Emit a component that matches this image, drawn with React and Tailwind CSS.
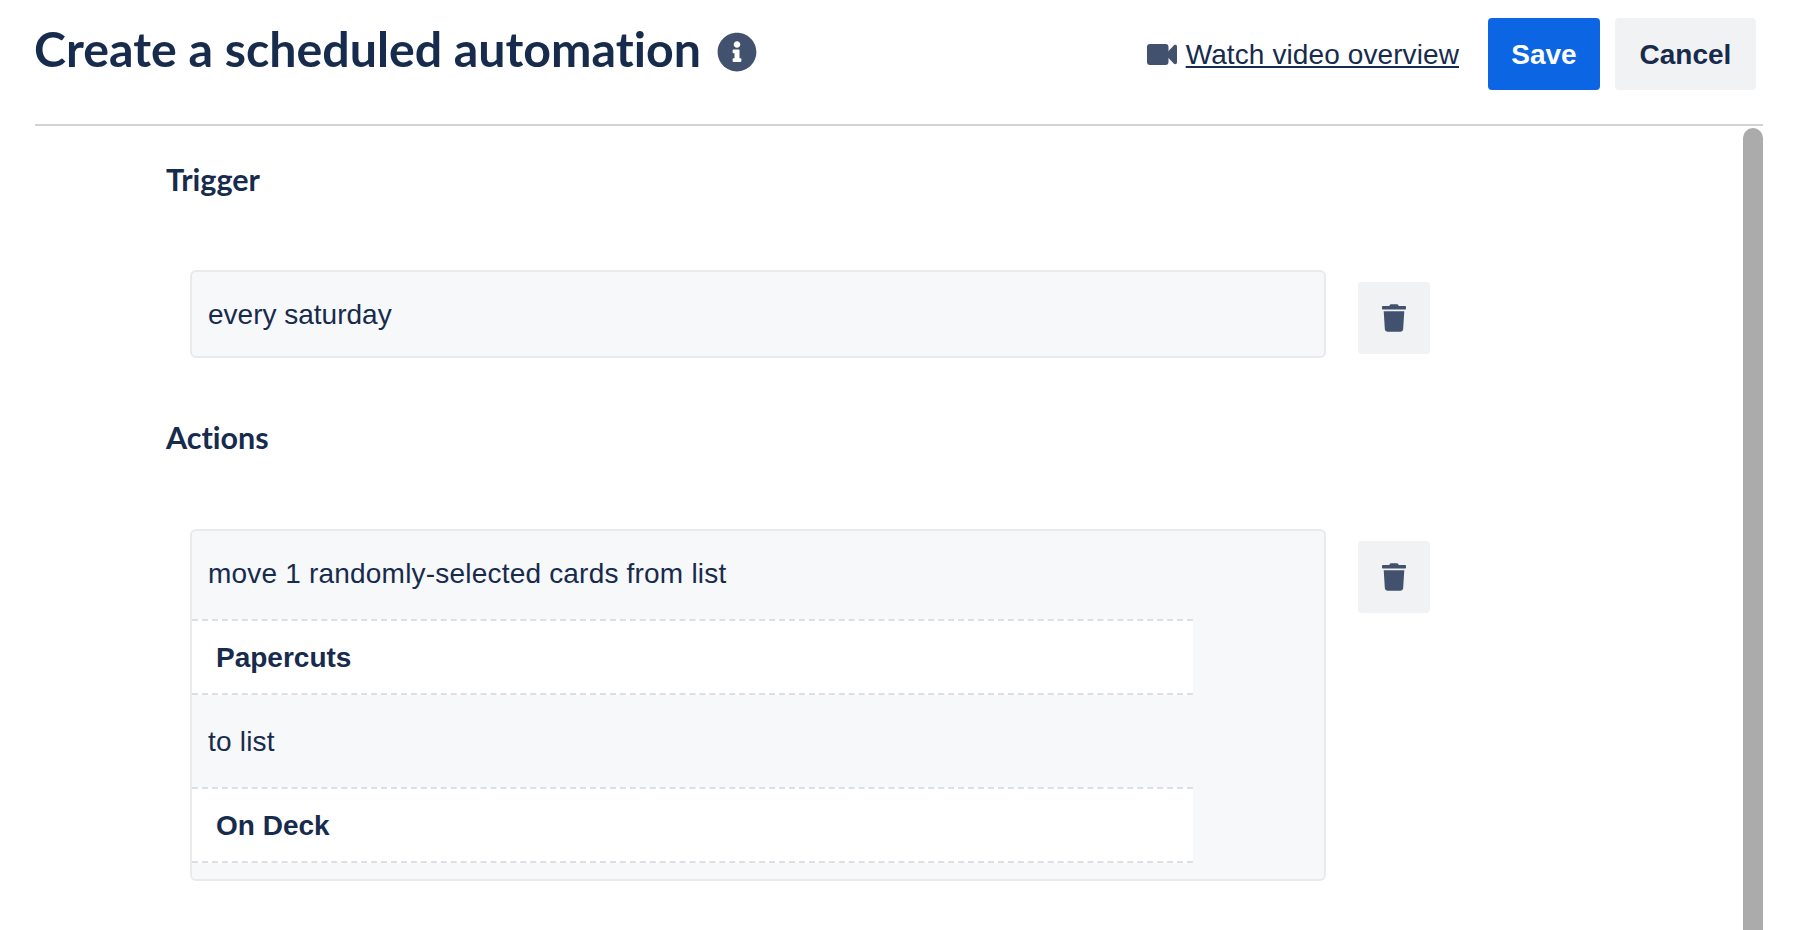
import React from "react";
import { FaInfoCircle, FaTrash } from "react-icons/fa";

const VideoIcon = () => (
  <svg viewBox="0 0 30 21" className="mr-[9px] h-[21px] w-[30px] fill-[#42526e]">
    <rect width="21.5" height="21" rx="3" />
    <path d="M21 7.5 27 1.2C28 .3 30 .8 30 2.4V18.6C30 20.2 28 20.7 27 19.8L21 13.5Z" />
  </svg>
);

const TrashButton = () => (
  <button
    type="button"
    className="flex h-[72px] w-[72px] shrink-0 items-center justify-center rounded-[4px] bg-[#f1f2f4] text-[#42526e]"
  >
    <FaTrash className="h-[28px] w-[24px]" />
  </button>
);

const SelectedList = ({ name }) => (
  <div className="flex h-[76px] w-[1001px] items-center border-y-2 border-dashed border-[#dcdfe4] bg-white pl-[24px] pt-[1px] font-bold">
    {name}
  </div>
);

const SectionTitle = ({ children, className }) => (
  <h2 className={`font-['Lato'] text-[30.5px] leading-[36px] font-bold [font-variant-ligatures:none] ${className}`}>
    {children}
  </h2>
);

export default function App() {
  return (
    <div className="h-[930px] overflow-hidden bg-white pl-[35px] pr-[45px] font-['Liberation_Sans',sans-serif] text-[28px] text-[#172b4d]">
      <header className="flex h-[126px] items-start justify-between border-b-2 border-[#d3d3d3] pr-[7px] pt-[18px]">
        <div className="flex items-start gap-[16px]">
          <h1 className="-ml-[1px] -mt-[1px] font-['Lato'] text-[48.3px] leading-[62px] font-bold [font-variant-ligatures:none]">
            Create a scheduled automation
          </h1>
          <FaInfoCircle className="mt-[14px] h-[40px] w-[40px] text-[#42526e]" />
        </div>
        <div className="flex items-center pt-[1px]">
          <VideoIcon />
          <a className="tracking-[0.1px] underline">Watch video overview</a>
          <button type="button" className="ml-[29px] -mt-[1px] h-[72px] w-[112px] rounded-[4px] bg-[#0c66e4] pt-[1px] font-bold text-white">
            Save
          </button>
          <button type="button" className="ml-[15px] -mt-[1px] h-[72px] w-[141px] rounded-[4px] bg-[#f1f2f4] pt-[1px] font-bold">
            Cancel
          </button>
        </div>
      </header>

      <div className="flex">
        <main className="flex-1 pl-[131px] pt-[35px]">
          <SectionTitle>Trigger</SectionTitle>
          <div className="mt-[73px] ml-[24px] flex items-start">
            <div className="flex h-[88px] w-[1136px] items-center rounded-[6px] border-2 border-[#e8eaee] bg-[#f7f8f9] pl-[16px] pt-[1px]">
              every saturday
            </div>
            <div className="ml-[32px] mt-[12px]">
              <TrashButton />
            </div>
          </div>
          <SectionTitle className="mt-[61px]">Actions</SectionTitle>
          <div className="mt-[74px] ml-[24px] flex items-start">
            <div className="h-[352px] w-[1136px] rounded-[6px] border-2 border-[#e8eaee] bg-[#f7f8f9]">
              <div className="flex h-[88px] items-center pb-[2px] pl-[16px] tracking-[0.2px]">
                move 1 randomly-selected cards from list
              </div>
              <SelectedList name="Papercuts" />
              <div className="flex h-[92px] items-center pl-[16px] pt-[1px] tracking-[0.2px]">to list</div>
              <SelectedList name="On Deck" />
            </div>
            <div className="ml-[32px] mt-[12px]">
              <TrashButton />
            </div>
          </div>
        </main>
        <div className="mt-[2px] h-[802px] w-[20px] rounded-t-[10px] bg-[#ababab]" />
      </div>
    </div>
  );
}
